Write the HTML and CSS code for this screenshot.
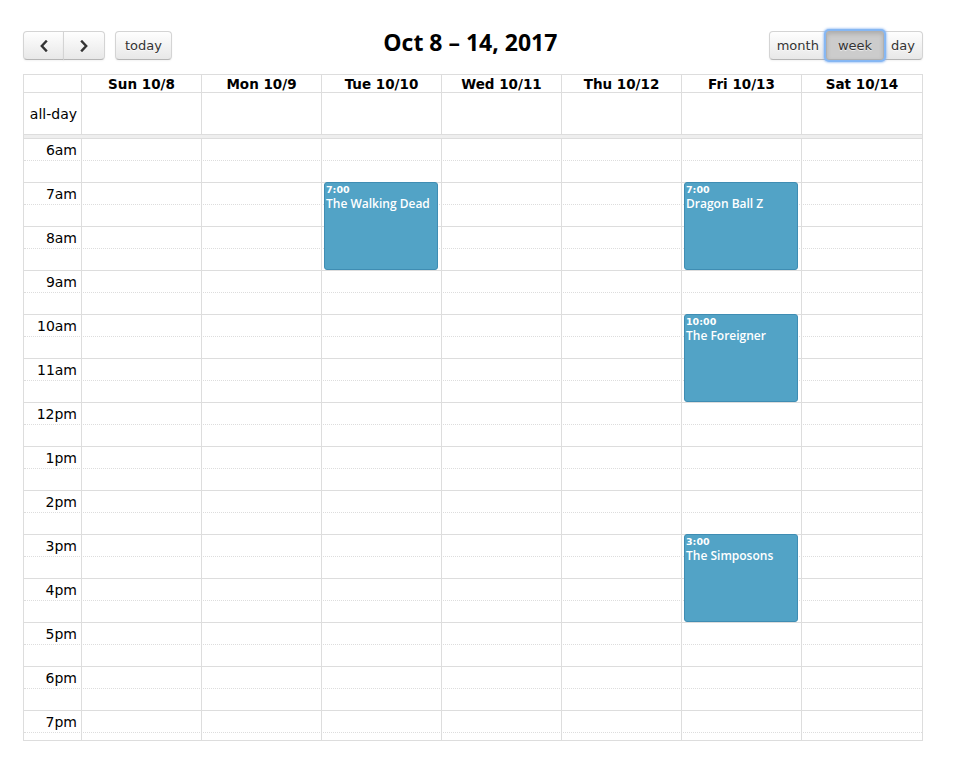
FILE: index.html
```html
<!DOCTYPE html>
<html lang="en">
<head>
<meta charset="utf-8">
<title>Week calendar</title>
<link rel="stylesheet" href="styles.css">
</head>
<body>
<div class="fc">
  <div class="toolbar">
    <div class="tb-left">
      <div class="btn-group">
        <button class="btn btn-icon btn-first" aria-label="prev"><svg width="10" height="12" viewBox="0 0 10 12"><polyline points="7,1.5 2.8,6 7,10.5" fill="none" stroke="#333" stroke-width="2.4" stroke-linecap="square"/></svg></button>
        <button class="btn btn-icon btn-last" aria-label="next"><svg width="10" height="12" viewBox="0 0 10 12"><polyline points="3,1.5 7.2,6 3,10.5" fill="none" stroke="#333" stroke-width="2.4" stroke-linecap="square"/></svg></button>
      </div>
      <button class="btn btn-single">today</button>
    </div>
    <div class="tb-center"><h2 class="title">Oct 8 – 14, 2017</h2></div>
    <div class="tb-right">
      <div class="btn-group">
        <button class="btn btn-first btn-month">month</button>
        <button class="btn btn-active">week</button>
        <button class="btn btn-last btn-day">day</button>
      </div>
    </div>
  </div>

  <div class="view">
    <div class="row head">
      <div class="axis"></div>
      <div class="cell">Sun 10/8</div>
      <div class="cell">Mon 10/9</div>
      <div class="cell">Tue 10/10</div>
      <div class="cell">Wed 10/11</div>
      <div class="cell">Thu 10/12</div>
      <div class="cell">Fri 10/13</div>
      <div class="cell">Sat 10/14</div>
    </div>
    <div class="row allday">
      <div class="axis">all-day</div>
      <div class="cell"></div>
      <div class="cell"></div>
      <div class="cell"></div>
      <div class="cell"></div>
      <div class="cell"></div>
      <div class="cell"></div>
      <div class="cell"></div>
    </div>
    <div class="divider"></div>
    <div class="scroller">
      <div class="slats">
        <div class="slot"><span class="label">6am</span></div>
        <div class="slot minor"></div>
        <div class="slot"><span class="label">7am</span></div>
        <div class="slot minor"></div>
        <div class="slot"><span class="label">8am</span></div>
        <div class="slot minor"></div>
        <div class="slot"><span class="label">9am</span></div>
        <div class="slot minor"></div>
        <div class="slot"><span class="label">10am</span></div>
        <div class="slot minor"></div>
        <div class="slot"><span class="label">11am</span></div>
        <div class="slot minor"></div>
        <div class="slot"><span class="label">12pm</span></div>
        <div class="slot minor"></div>
        <div class="slot"><span class="label">1pm</span></div>
        <div class="slot minor"></div>
        <div class="slot"><span class="label">2pm</span></div>
        <div class="slot minor"></div>
        <div class="slot"><span class="label">3pm</span></div>
        <div class="slot minor"></div>
        <div class="slot"><span class="label">4pm</span></div>
        <div class="slot minor"></div>
        <div class="slot"><span class="label">5pm</span></div>
        <div class="slot minor"></div>
        <div class="slot"><span class="label">6pm</span></div>
        <div class="slot minor"></div>
        <div class="slot"><span class="label">7pm</span></div>
        <div class="slot minor"></div>
      </div>
      <div class="cols">
        <div class="col-axis"></div>
        <div class="col"></div>
        <div class="col"></div>
        <div class="col">
          <div class="event" style="top:44px;height:88px">
            <div class="ev-time">7:00</div>
            <div class="ev-title">The Walking Dead</div>
          </div>
        </div>
        <div class="col"></div>
        <div class="col"></div>
        <div class="col">
          <div class="event" style="top:44px;height:88px">
            <div class="ev-time">7:00</div>
            <div class="ev-title">Dragon Ball Z</div>
          </div>
          <div class="event" style="top:176px;height:88px">
            <div class="ev-time">10:00</div>
            <div class="ev-title">The Foreigner</div>
          </div>
          <div class="event" style="top:396px;height:88px">
            <div class="ev-time">3:00</div>
            <div class="ev-title">The Simposons</div>
          </div>
        </div>
        <div class="col"></div>
      </div>
    </div>
  </div>
</div>
</body>
</html>
```

FILE: styles.css
```css
* { box-sizing: border-box; }

html, body {
  margin: 0;
  padding: 0;
  background: #fff;
}

body {
  padding-top: 31px;
  font-family: "DejaVu Sans", "Noto Sans", sans-serif;
  font-size: 14px;
  color: #000;
}

.fc {
  width: 900px;
  margin-left: 23px;
}

/* ---------- toolbar ---------- */
.toolbar {
  display: flex;
  align-items: flex-start;
  margin-bottom: 14px;
}

.tb-left {
  display: flex;
  gap: 10px;
}

.tb-center {
  flex: 1;
  text-align: center;
}

.tb-right {
  display: flex;
}

.title {
  margin: 0;
  font-family: "Open Sans", "DejaVu Sans", sans-serif;
  font-weight: 700;
  font-size: 23px;
  line-height: 23px;
  color: #000;
}

.btn-group {
  display: flex;
}

.btn {
  position: relative;
  height: 29px;
  margin: 0;
  padding: 0 9px;
  font-family: "DejaVu Sans", sans-serif;
  font-size: 13px;
  color: #333;
  background: linear-gradient(#fefefe, #e8e8e8);
  border: 1px solid;
  border-color: #d4d4d4 #d4d4d4 #b5b5b5;
  border-radius: 0;
  box-shadow: inset 0 1px 0 rgba(255,255,255,.3), 0 1px 2px rgba(0,0,0,.05);
  text-shadow: 0 1px 1px rgba(255,255,255,.75);
  cursor: pointer;
  display: flex;
  align-items: center;
  justify-content: center;
}

.btn + .btn { margin-left: -1px; }

.btn-single { border-radius: 4px; padding: 0 9px; }
.btn-first { border-radius: 4px 0 0 4px; }
.btn-last { border-radius: 0 4px 4px 0; }

.btn-icon { width: 41px; padding: 0; }
.btn-icon.btn-last { width: 42px; }

.btn-month { padding: 0 7px; }
.btn-day { padding: 0 7px; }

.btn-active {
  z-index: 2;
  padding: 0 11px;
  background: #cccccc;
  border-color: #b0b0b0;
  box-shadow:
    inset 0 2px 4px rgba(0,0,0,.15),
    0 0 0 2px #86b7f3,
    0 0 2px 3px rgba(120,172,240,.55);
  border-radius: 3px;
}

/* ---------- view ---------- */
.view {
  border: 1px solid #ddd;
}

.row,
.cols {
  display: grid;
  grid-template-columns: 57px repeat(6, 120px) 1fr;
}

.row .cell {
  border-left: 1px solid #ddd;
}

.head {
  height: 18px;
  border-bottom: 1px solid #ddd;
}

.head .cell {
  text-align: center;
  font-weight: 700;
  font-size: 13.5px;
  line-height: 19px;
  white-space: nowrap;
}

.allday {
  height: 41px;
}

.allday .axis {
  text-align: right;
  padding-right: 4px;
  line-height: 42px;
  white-space: nowrap;
}

.divider {
  height: 4px;
  border-top: 1px solid #ddd;
  background: #eee;
}

.scroller {
  position: relative;
  height: 602px;
  overflow: hidden;
}

.slot {
  height: 22px;
  border-top: 1px solid #ddd;
}

.slot.minor {
  border-top-style: dotted;
}

.label {
  display: block;
  width: 57px;
  padding: 1px 4px 0 0;
  text-align: right;
  line-height: 21px;
  white-space: nowrap;
}

.cols {
  position: absolute;
  top: 0;
  left: 0;
  right: 0;
  bottom: 0;
}

.col {
  position: relative;
  border-left: 1px solid #ddd;
}

.event {
  position: absolute;
  left: 2px;
  right: 3px;
  padding: 0 1px;
  background: #52a3c6;
  border: 1px solid #3f8db3;
  border-radius: 3px;
  color: #fff;
  overflow: hidden;
}

.ev-time {
  font-family: "DejaVu Sans", sans-serif;
  font-size: 9.5px;
  font-weight: 700;
  line-height: 13.5px;
  white-space: nowrap;
}

.ev-title {
  font-family: "Open Sans", "DejaVu Sans", sans-serif;
  font-weight: 600;
  font-size: 12px;
  line-height: 14px;
  white-space: nowrap;
}
```
